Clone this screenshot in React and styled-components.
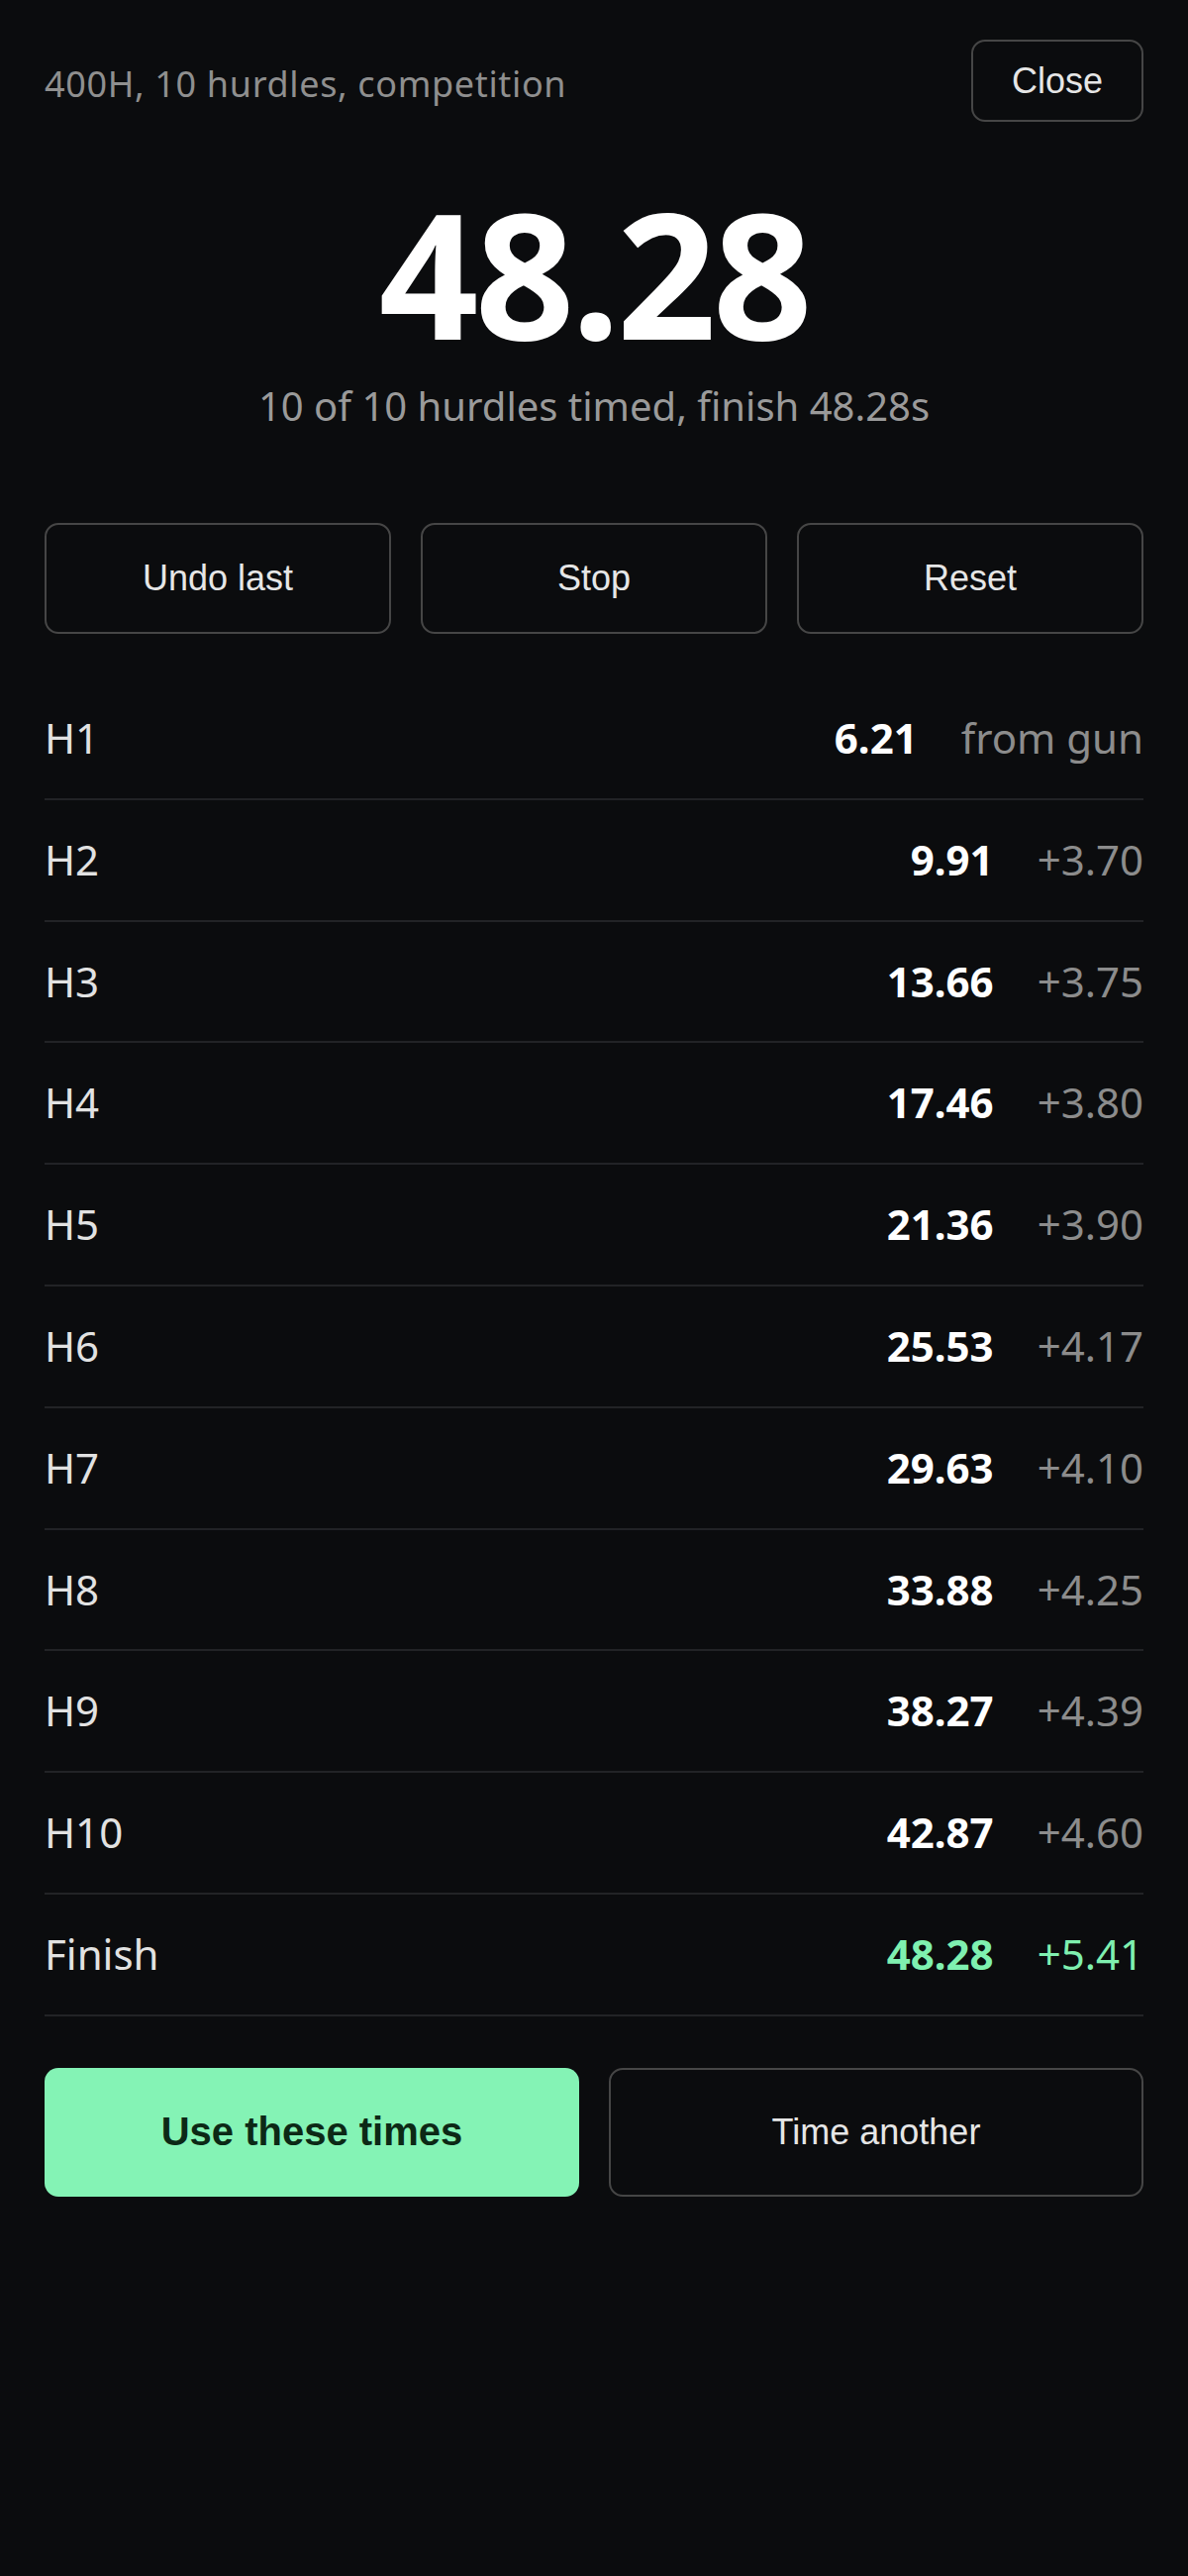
import React from 'react';
import styled, { createGlobalStyle } from 'styled-components';

const GlobalStyle = createGlobalStyle`
  html, body {
    margin: 0;
    padding: 0;
    background: #0b0c0e;
  }
  body {
    font-family: "Noto Sans", "Open Sans", sans-serif;
    color: #e8e8e8;
  }
  * {
    box-sizing: border-box;
  }
`;

const splits = [
  { label: 'H1', time: '6.21', delta: 'from gun' },
  { label: 'H2', time: '9.91', delta: '+3.70' },
  { label: 'H3', time: '13.66', delta: '+3.75' },
  { label: 'H4', time: '17.46', delta: '+3.80' },
  { label: 'H5', time: '21.36', delta: '+3.90' },
  { label: 'H6', time: '25.53', delta: '+4.17' },
  { label: 'H7', time: '29.63', delta: '+4.10' },
  { label: 'H8', time: '33.88', delta: '+4.25' },
  { label: 'H9', time: '38.27', delta: '+4.39' },
  { label: 'H10', time: '42.87', delta: '+4.60' },
  { label: 'Finish', time: '48.28', delta: '+5.41', finish: true },
];

export default function App() {
  return (
    <>
      <GlobalStyle />
      <Page>
        <Header>
          <EventTitle>400H, 10 hurdles, competition</EventTitle>
          <CloseButton>Close</CloseButton>
        </Header>

        <BigTime>48.28</BigTime>
        <Summary>10 of 10 hurdles timed, finish 48.28s</Summary>

        <Controls>
          <OutlineButton>Undo last</OutlineButton>
          <OutlineButton>Stop</OutlineButton>
          <OutlineButton>Reset</OutlineButton>
        </Controls>

        <SplitList>
          {splits.map((s) => (
            <SplitRow key={s.label}>
              <SplitLabel>{s.label}</SplitLabel>
              <SplitValues>
                <SplitTime $finish={s.finish}>{s.time}</SplitTime>
                <SplitDelta $finish={s.finish}>{s.delta}</SplitDelta>
              </SplitValues>
            </SplitRow>
          ))}
        </SplitList>

        <Actions>
          <PrimaryButton>Use these times</PrimaryButton>
          <OutlineButton $tall>Time another</OutlineButton>
        </Actions>
      </Page>
    </>
  );
}

const Page = styled.div`
  width: 1200px;
  min-height: 2601px;
  padding: 40px 45px;
  background: #0b0c0e;
`;

const Header = styled.div`
  display: flex;
  align-items: center;
  justify-content: space-between;
`;

const EventTitle = styled.div`
  font-size: 36px;
  letter-spacing: 0.65px;
  color: #8f8f8f;
  margin-top: 6px;
`;

const buttonBase = `
  font-family: "Liberation Sans", Arial, sans-serif;
  font-size: 36px;
  border-radius: 14px;
  cursor: pointer;
  display: flex;
  align-items: center;
  justify-content: center;
`;

const CloseButton = styled.button`
  ${buttonBase}
  width: 174px;
  height: 83px;
  background: transparent;
  border: 2px solid #464646;
  color: #e6e6e6;
`;

const BigTime = styled.div`
  margin-top: 64px;
  font-size: 176px;
  font-weight: 700;
  line-height: 1;
  letter-spacing: -0.02em;
  text-align: center;
  color: #ffffff;
`;

const Summary = styled.div`
  margin-top: 23px;
  font-size: 40px;
  line-height: 1.2;
  text-align: center;
  color: #9a9a9a;
`;

const Controls = styled.div`
  margin-top: 94px;
  display: grid;
  grid-template-columns: repeat(3, 1fr);
  gap: 30px;
`;

const OutlineButton = styled.button`
  ${buttonBase}
  height: ${(p) => (p.$tall ? '130px' : '112px')};
  background: transparent;
  border: 2px solid #464646;
  color: #e6e6e6;
`;

const SplitList = styled.div`
  margin-top: 45px;
`;

const SplitRow = styled.div`
  display: flex;
  align-items: center;
  justify-content: space-between;
  padding: 31px 0;
  font-size: 42px;
  line-height: 1.4;
  border-bottom: 2px solid #222326;
`;

const SplitLabel = styled.span`
  color: #e2e2e2;
`;

const SplitValues = styled.div`
  display: flex;
  align-items: baseline;
  gap: 44px;
`;

const SplitTime = styled.span`
  font-weight: 700;
  color: ${(p) => (p.$finish ? '#7ff0b0' : '#ffffff')};
`;

const SplitDelta = styled.span`
  color: ${(p) => (p.$finish ? '#7ff0b0' : '#8c8c8c')};
`;

const Actions = styled.div`
  margin-top: 52px;
  display: grid;
  grid-template-columns: 1fr 1fr;
  gap: 30px;
`;

const PrimaryButton = styled.button`
  ${buttonBase}
  height: 130px;
  font-size: 40px;
  font-weight: 700;
  background: #84f3b5;
  border: none;
  color: #0c2916;
`;
